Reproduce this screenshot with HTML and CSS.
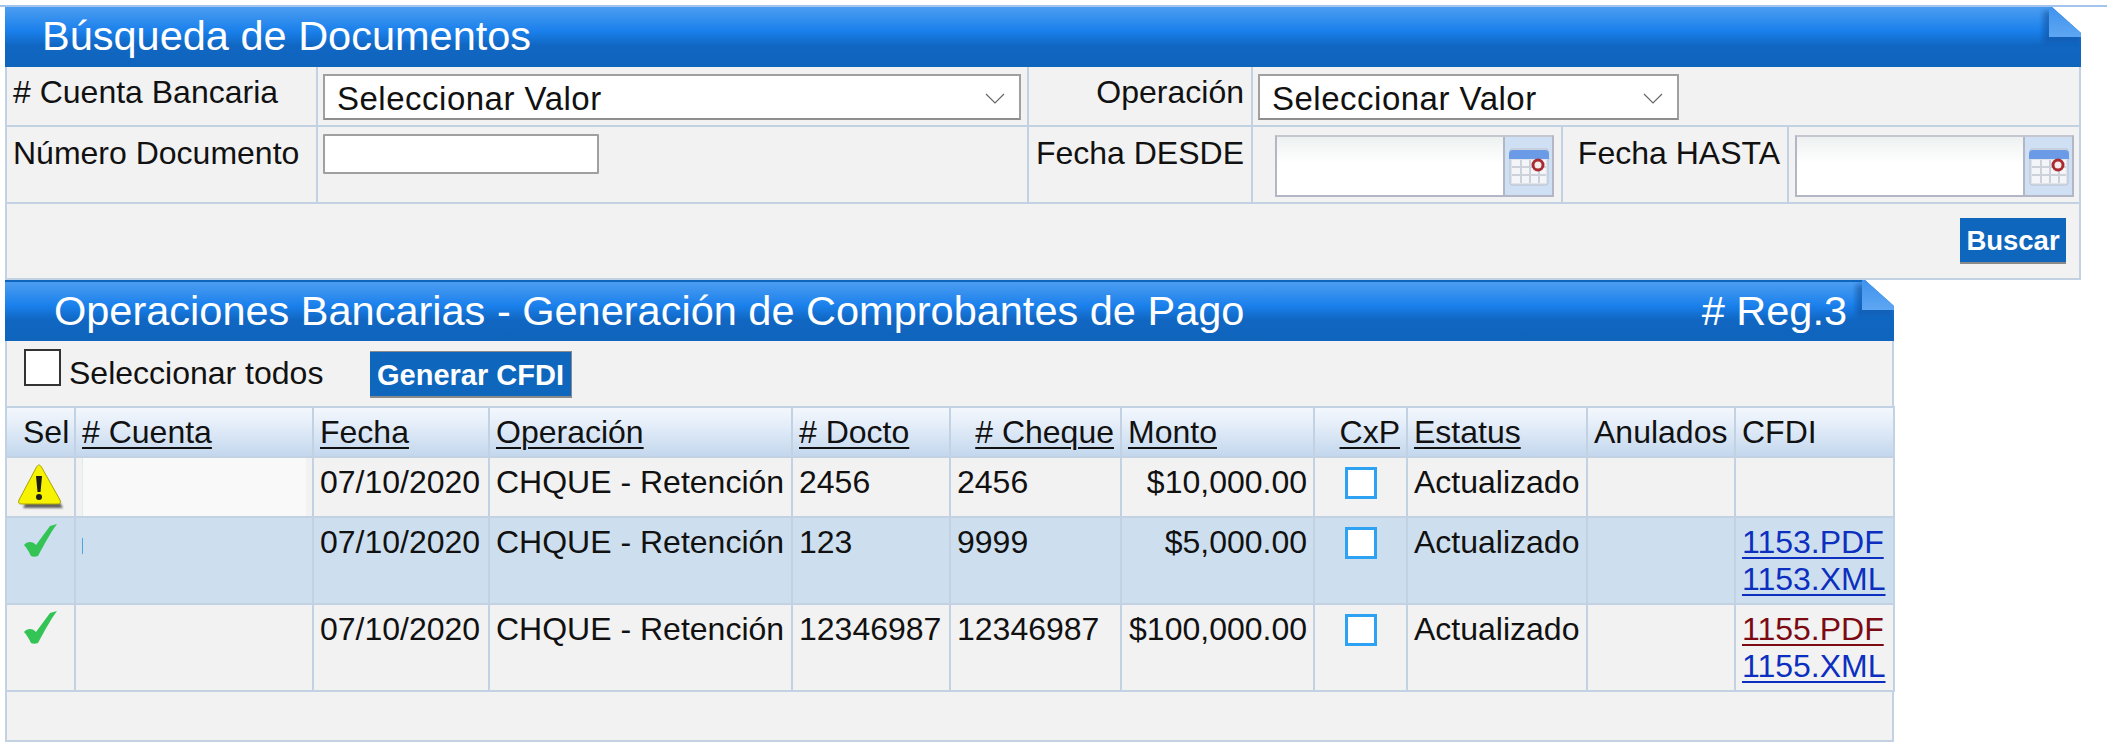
FILE: index.html
```html
<!DOCTYPE html>
<html lang="es">
<head>
<meta charset="utf-8">
<title>Búsqueda de Documentos</title>
<link rel="stylesheet" href="styles.css">
</head>
<body>
<main class="page">
  <section class="panel panel-search">
    <header class="title title-search">
      <h1>Búsqueda de Documentos</h1>
      <svg class="fold" viewBox="0 0 44 40"><defs><linearGradient id="fg" x1="0" y1="0" x2="0" y2="1"><stop offset="0" stop-color="#3f93ee"/><stop offset="1" stop-color="#5ea6f2"/></linearGradient><filter id="fb"><feGaussianBlur stdDeviation="2.5"/></filter></defs><polygon points="6,4 44,4 44,36 6,36" fill="#0a4f9c" opacity=".55" filter="url(#fb)"/><polygon points="15,0 44,0 44,26" fill="#fff"/><polygon points="15,0 44,26 44,30 12,30 12,0" fill="url(#fg)"/></svg>
    </header>
    <div class="form-row row-one">
      <div class="cell label">
        # Cuenta Bancaria
      </div>
      <div class="cell"><div class="select select-wide"><span>Seleccionar Valor</span><svg class="chev" viewBox="0 0 20 11"><path d="M1 1l9 9 9-9" fill="none" stroke="#666" stroke-width="1.2"/></svg></div></div>
      <div class="cell label end">Operación</div>
      <div class="cell"><div class="select select-narrow"><span>Seleccionar Valor</span><svg class="chev" viewBox="0 0 20 11"><path d="M1 1l9 9 9-9" fill="none" stroke="#666" stroke-width="1.2"/></svg></div></div>
    </div>
    <div class="form-row row-two">
      <div class="cell label">Número Documento</div>
      <div class="cell"><input class="text-input" type="text" aria-label="Número Documento"></div>
      <div class="cell label end">Fecha DESDE</div>
      <div class="cell cell-date cell-desde">
        <div class="date"><div class="date-field"></div><div class="date-btn"><svg class="cal" viewBox="0 0 40 38"><rect x="1" y="1" width="38" height="36" rx="2" fill="#dfe3ea" stroke="#b9c0ce"/><rect x="3" y="12" width="34" height="23" fill="#f4f5f8"/><g stroke="#ccd1da" stroke-width="2"><path d="M12 12v23M21 12v23M30 12v23M3 19h34M3 27h34"/></g><path d="M0 6a4 4 0 0 1 4-4h32a4 4 0 0 1 4 4v5H0z" fill="#6b9be6"/><circle cx="29" cy="17" r="5" fill="#f6eeee" stroke="#a92b2f" stroke-width="3"/></svg></div></div>
      </div>
      <div class="cell label end">Fecha HASTA</div>
      <div class="cell cell-date">
        <div class="date"><div class="date-field"></div><div class="date-btn"><svg class="cal" viewBox="0 0 40 38"><rect x="1" y="1" width="38" height="36" rx="2" fill="#dfe3ea" stroke="#b9c0ce"/><rect x="3" y="12" width="34" height="23" fill="#f4f5f8"/><g stroke="#ccd1da" stroke-width="2"><path d="M12 12v23M21 12v23M30 12v23M3 19h34M3 27h34"/></g><path d="M0 6a4 4 0 0 1 4-4h32a4 4 0 0 1 4 4v5H0z" fill="#6b9be6"/><circle cx="29" cy="17" r="5" fill="#f6eeee" stroke="#a92b2f" stroke-width="3"/></svg></div></div>
      </div>
    </div>
    <div class="actions"><button class="btn btn-buscar" type="button">Buscar</button></div>
  </section>

  <section class="panel panel-ops">
    <header class="title title-ops">
      <h2>Operaciones Bancarias - Generación de Comprobantes de Pago</h2>
      <span class="reg"># Reg.3</span>
      <svg class="fold" viewBox="0 0 44 40"><polygon points="6,4 44,4 44,36 6,36" fill="#0a4f9c" opacity=".55" filter="url(#fb)"/><polygon points="15,0 44,0 44,26" fill="#fff"/><polygon points="15,0 44,26 44,30 12,30 12,0" fill="url(#fg)"/></svg>
    </header>
    <div class="toolbar">
      <label class="select-all"><input class="check-all" type="checkbox"><span>Seleccionar todos</span></label>
      <button class="btn btn-cfdi" type="button">Generar CFDI</button>
    </div>
    <table class="grid">
      <colgroup>
        <col class="c-sel"><col class="c-cuenta"><col class="c-fecha"><col class="c-oper"><col class="c-docto"><col class="c-cheque"><col class="c-monto"><col class="c-cxp"><col class="c-est"><col class="c-anul"><col class="c-cfdi">
      </colgroup>
      <thead>
        <tr>
          <th class="th-sel">Sel</th><th><u># Cuenta</u></th><th><u>Fecha</u></th><th><u>Operación</u></th><th><u># Docto</u></th><th class="right"><u># Cheque</u></th><th><u>Monto</u></th><th class="right"><u>CxP</u></th><th><u>Estatus</u></th><th>Anulados</th><th>CFDI</th>
        </tr>
      </thead>
      <tbody>
        <tr class="r1">
          <td class="center icon-cell"><svg class="warn" viewBox="0 0 46 46"><defs><filter id="wb"><feGaussianBlur stdDeviation="1.2"/></filter></defs><path d="M23 3L45 41H5z" fill="#333" opacity=".75" filter="url(#wb)" transform="translate(0 3)"/><path d="M21 1C22 1 23 2 24 4L42 36C43 39 42 40 40 40H3C1 40 0 39 1 36L18 4C19 2 20 1 21 1z" fill="#f6f200" stroke="#a9a500" stroke-width="1"/><path d="M18 12h6l-1.5 16h-3z" fill="#1c1c1c"/><circle cx="21" cy="33" r="3" fill="#1c1c1c"/></svg></td>
          <td class="masked-cell"><div class="mask"></div></td>
          <td>07/10/2020</td><td>CHQUE - Retención</td><td>2456</td><td>2456</td><td class="right">$10,000.00</td>
          <td class="center"><span class="box"></span></td><td>Actualizado</td><td></td><td></td>
        </tr>
        <tr class="r2">
          <td class="center icon-cell"><svg class="tick" viewBox="0 0 33 33"><path d="M0 21C3 17 9 17 12 21L26 2 33 0C27 8 21 19 14 32 11 33 9 33 7 32 5 28 3 24 0 21z" fill="#33c455"/></svg></td>
          <td class="tick-cell"><span class="blip"></span></td>
          <td>07/10/2020</td><td>CHQUE - Retención</td><td>123</td><td>9999</td><td class="right">$5,000.00</td>
          <td class="center"><span class="box"></span></td><td>Actualizado</td><td></td>
          <td><a class="link" href="#a">1153.PDF</a><br><a class="link" href="#b">1153.XML</a></td>
        </tr>
        <tr class="r3">
          <td class="center icon-cell"><svg class="tick" viewBox="0 0 33 33"><path d="M0 21C3 17 9 17 12 21L26 2 33 0C27 8 21 19 14 32 11 33 9 33 7 32 5 28 3 24 0 21z" fill="#33c455"/></svg></td>
          <td></td>
          <td>07/10/2020</td><td>CHQUE - Retención</td><td>12346987</td><td>12346987</td><td class="right">$100,000.00</td>
          <td class="center"><span class="box"></span></td><td>Actualizado</td><td></td>
          <td><a class="link visited" href="#c">1155.PDF</a><br><a class="link" href="#d">1155.XML</a></td>
        </tr>
      </tbody>
    </table>
    <div class="footer"></div>
  </section>
</main>
</body>
</html>
```
FILE: styles.css
```css
* { box-sizing: border-box; }
html, body { margin: 0; padding: 0; background: #fff; }
body { font-family: "Liberation Sans", Arial, sans-serif; font-size: 32px; line-height: 37px; color: #111; }
.page { margin-top: 5px; border-top: 2px solid #a3c4ec; padding-left: 5px; }
.panel { position: relative; }
.panel-search { width: 2076px; }
.panel-ops { width: 1889px; }

.title { position: relative; display: flex; align-items: center; justify-content: space-between; color: #fff; background: linear-gradient(#4c9df0 0, #1a80ec 40%, #1066c1 65%, #0f65bc 100%); }
.title h1, .title h2 { margin: 0 0 2px; font-weight: normal; font-size: 41.5px; line-height: 46px; }
.title-search { height: 60px; padding-left: 37px; }
.title-ops { height: 61px; padding-left: 49px; padding-right: 47px; border-top: 2px solid #0f66bd; }
.reg { margin-bottom: 2px; font-size: 41.5px; line-height: 46px; }
.fold { position: absolute; top: 0; right: 0; width: 44px; height: 40px; }
.title-ops .fold { top: -2px; }

.form-row { display: grid; background: #f2f2f2; border-left: 2px solid #c3d2e2; border-right: 2px solid #c3d2e2; border-bottom: 2px solid #c3d2e2; }
.row-one { height: 60px; grid-template-columns: 309px 711px 224px 1fr; }
.row-two { height: 77px; grid-template-columns: 309px 711px 224px 310px 226px 1fr; }
.cell { border-left: 2px solid #c3d2e2; padding: 7px 0 0 5px; }
.cell:first-child { border-left: 0; }
.label { padding: 7px 7px 0 6px; white-space: nowrap; }
.row-two .label { padding-top: 8px; }
.end { text-align: right; }
.cell-date { padding-left: 6px; }
.cell-desde { padding-left: 22px; }

.select { display: flex; align-items: center; justify-content: space-between; height: 46px; background: #fff; border: 2px solid #a0a0a0; border-bottom-color: #8e8e8e; padding: 2px 14px 0 12px; font-size: 33px; letter-spacing: .5px; }
.select-wide { width: 698px; }
.select-narrow { width: 421px; }
.chev { width: 20px; height: 11px; }
.text-input { display: block; width: 276px; height: 40px; background: #fff; border: 2px solid #a0a0a0; border-radius: 1px; padding: 0; }

.date { display: flex; width: 279px; height: 62px; margin-top: 1px; border: 2px solid #b3b6c4; border-top-color: #c4c6d0; background: #cfe0f5; }
.date-field { width: 228px; background: linear-gradient(#eef1f1, #fff 45%); border-right: 2px solid #b3b6c4; }
.date-btn { flex: 1; display: flex; align-items: center; justify-content: center; padding-top: 2px; }
.cal { width: 40px; height: 38px; }

.actions { display: flex; justify-content: flex-end; align-items: flex-start; height: 76px; padding: 14px 13px 0 0; background: #f2f2f2; border: 2px solid #c3d2e2; border-top: 0; }
.btn { display: block; background: #0f66bd; color: #fff; border: 0; border-bottom: 2px solid #8a8a8a; font-family: "Liberation Sans", Arial, sans-serif; font-weight: bold; line-height: 32px; padding: 2px 0 0; text-align: center; }
.btn-buscar { width: 106px; height: 46px; font-size: 27.5px; }
.btn-cfdi { width: 202px; height: 47px; margin: 2px 0 0 47px; font-size: 29px; border-right: 1px solid #8a8a8a; border-top: 1px solid #8a8a8a; }

.toolbar { display: flex; align-items: center; height: 65px; padding-left: 17px; background: #f2f2f2; border-left: 2px solid #c3d2e2; border-right: 2px solid #c3d2e2; }
.select-all { display: flex; align-items: center; }
.check-all { appearance: none; width: 37px; height: 37px; margin: 0 8px 0 0; position: relative; top: -6px; background: #fff; border: 2px solid #333; }
.select-all span { width: 254px; white-space: nowrap; }

.grid { width: 1888px; table-layout: fixed; border-collapse: collapse; background: #f2f2f2; border: 2px solid #c3d2e2; }
.c-sel { width: 69px; } .c-cuenta { width: 238px; } .c-fecha { width: 176px; } .c-oper { width: 303px; }
.c-docto { width: 158px; } .c-cheque { width: 171px; } .c-monto { width: 193px; } .c-cxp { width: 93px; }
.c-est { width: 180px; } .c-anul { width: 148px; } .c-cfdi { width: 159px; }
.grid th, .grid td { padding: 6px 6px 0; border: 2px solid #c3d2e2; text-align: left; vertical-align: top; font-weight: normal; white-space: nowrap; overflow: hidden; }
.grid thead th { height: 50px; background: linear-gradient(#f3f7fd, #e2ecf8 40%, #c3d7ed); }
.grid .th-sel { padding-left: 16px; padding-right: 0; }
.grid .center { text-align: center; padding-left: 0; padding-right: 0; }
.grid .right { text-align: right; }
u { text-decoration-thickness: 2px; text-underline-offset: 4px; }
.r1 td { height: 59px; }
.r2 td { height: 87px; background: #cddfee; }
.r3 td { height: 87px; }
.grid .icon-cell { padding-top: 6px; }
.warn { display: block; width: 46px; height: 46px; margin: 0 auto; }
.tick { display: block; width: 33px; height: 33px; margin: 0 auto; }
.grid .masked-cell { padding: 0 0 0 6px; }
.mask { height: 58px; margin-right: 6px; background: #f9f9f9; border-left: 1px solid #d6efef; }
.grid .tick-cell { padding: 0 0 0 6px; }
.blip { display: block; width: 1px; height: 16px; margin-top: 20px; background: #4aa6e0; }
.box { display: block; width: 32px; height: 32px; margin: 3px auto 0; background: #fff; border: 3px solid #2ea2f2; }
.link { color: #0c2fc0; text-decoration-thickness: 2px; text-underline-offset: 4px; }
.visited { color: #7c0a12; }
.footer { height: 50px; background: #f2f2f2; border: 2px solid #c3d2e2; border-top: 0; }
```
